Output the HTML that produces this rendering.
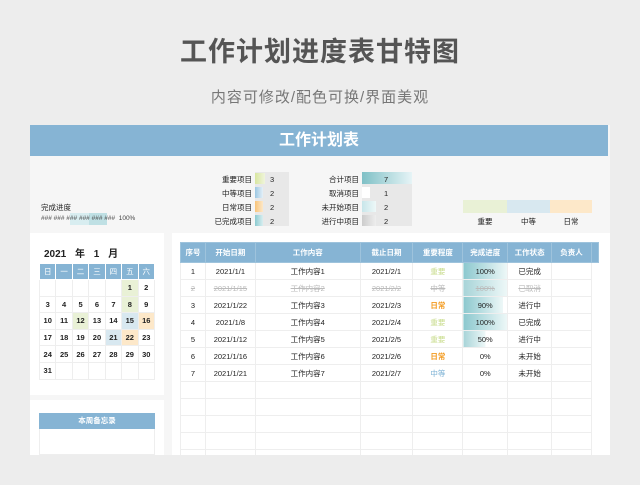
<!DOCTYPE html>
<html><head><meta charset="utf-8"><style>
*{margin:0;padding:0;box-sizing:border-box}
body{width:640px;height:485px;background:#ededed;position:relative;overflow:hidden;font-family:"Liberation Sans","Noto Sans CJK SC",sans-serif;color:#222}
.a{position:absolute}
.t{font-size:7.5px;white-space:nowrap}
.bar{height:12px}
table{border-collapse:collapse;position:absolute}
td{text-align:center;font-size:7.5px;border:1px solid #eee;padding:0}
</style></head><body>
<div class="a" style="left:0;top:30px;width:640px;text-align:center;font-size:27px;color:#555;font-weight:bold;letter-spacing:1px">工作计划进度表甘特图</div>
<div class="a" style="left:0;top:86px;width:640px;text-align:center;font-size:15px;color:#777;letter-spacing:1px">内容可修改/配色可换/界面美观</div>

<div class="a" style="left:30px;top:125px;width:580px;height:330px;background:#f6f6f6"></div>
<div class="a" style="left:30px;top:125px;width:578px;height:31px;background:#86b4d4;color:#fff;font-weight:bold;font-size:16px;text-align:center;line-height:31px">工作计划表</div>

<div class="a t" style="left:41px;top:202px">完成进度</div>
<div class="a" style="left:70px;top:213px;width:37px;height:12px;background:#d8edf0"></div>
<div class="a" style="left:89px;top:213px;width:18px;height:12px;background:#bfe0e4"></div>
<div class="a t" style="left:41px;top:215px;color:#444;font-size:6.5px">### ### ### ### ### ###&nbsp; 100%</div>

<!-- summary left -->
<div class="a t" style="left:200px;top:173px;width:52px;text-align:right;line-height:14px">重要项目<br>中等项目<br>日常项目<br>已完成项目</div>
<div class="a" style="left:255px;top:172px;width:34px;height:54px;background:linear-gradient(#e8e8e8,#e8e8e8)"></div>
<div class="a" style="left:255px;top:173px;width:10px;height:11px;background:linear-gradient(90deg,#d8e6a0,#f0f5dc)"></div>
<div class="a" style="left:255px;top:187px;width:8px;height:11px;background:linear-gradient(90deg,#9cc7e2,#e4f0f8)"></div>
<div class="a" style="left:255px;top:201px;width:8px;height:11px;background:linear-gradient(90deg,#f8c47a,#fde8c8)"></div>
<div class="a" style="left:255px;top:215px;width:8px;height:11px;background:linear-gradient(90deg,#8ccad0,#d8eef0)"></div>
<div class="a t" style="left:270px;top:173px;line-height:14px">3<br>2<br>2<br>2</div>

<div class="a t" style="left:310px;top:173px;width:49px;text-align:right;line-height:14px">合计项目<br>取消项目<br>未开始项目<br>进行中项目</div>
<div class="a" style="left:362px;top:172px;width:50px;height:54px;background:#e8e8e8"></div>
<div class="a" style="left:362px;top:172px;width:50px;height:12px;background:linear-gradient(90deg,#7fc0c6,#e6f4f6)"></div>
<div class="a" style="left:362px;top:187px;width:8px;height:11px;background:#fff"></div>
<div class="a" style="left:362px;top:201px;width:14px;height:11px;background:linear-gradient(90deg,#c8e6ea,#eef8f8)"></div>
<div class="a" style="left:362px;top:215px;width:14px;height:11px;background:linear-gradient(90deg,#ccc,#eee)"></div>
<div class="a t" style="left:384px;top:173px;line-height:14px">7<br>1<br>2<br>2</div>

<div class="a" style="left:463px;top:200px;width:44px;height:13px;background:#e9f1d6"></div>
<div class="a" style="left:507px;top:200px;width:43px;height:13px;background:#d8e8f0"></div>
<div class="a" style="left:550px;top:200px;width:42px;height:13px;background:#fde8c9"></div>
<div class="a t" style="left:463px;top:216px;width:44px;text-align:center">重要</div>
<div class="a t" style="left:507px;top:216px;width:43px;text-align:center">中等</div>
<div class="a t" style="left:550px;top:216px;width:42px;text-align:center">日常</div>

<!-- calendar panel -->
<div class="a" style="left:30px;top:233px;width:134px;height:162px;background:#fff"></div>
<div class="a" style="left:30px;top:400px;width:134px;height:55px;background:#fff"></div>
<div class="a" style="left:172px;top:233px;width:438px;height:222px;background:#fff"></div>
<div class="a" style="left:44px;top:245px;font-size:10px;font-weight:bold;word-spacing:6px">2021 年 1 月</div>
<table style="left:39px;top:263px;width:116px">
<tr style="background:#86b4d4;color:#fff;height:16px"><td style="border:1px solid #fff;color:#fff">日</td><td style="border:1px solid #fff;color:#fff">一</td><td style="border:1px solid #fff;color:#fff">二</td><td style="border:1px solid #fff;color:#fff">三</td><td style="border:1px solid #fff;color:#fff">四</td><td style="border:1px solid #fff;color:#fff">五</td><td style="border:1px solid #fff;color:#fff">六</td></tr>
<tr style="height:16.6px;font-weight:bold"><td></td><td></td><td></td><td></td><td></td><td style="background:#e9f1d6"><b>1</b></td><td><b>2</b></td></tr>
<tr style="height:16.6px"><td><b>3</b></td><td><b>4</b></td><td><b>5</b></td><td><b>6</b></td><td><b>7</b></td><td style="background:#e9f1d6"><b>8</b></td><td><b>9</b></td></tr>
<tr style="height:16.6px"><td><b>10</b></td><td><b>11</b></td><td style="background:#e9f1d6"><b>12</b></td><td><b>13</b></td><td><b>14</b></td><td style="background:#d8e8f0"><b>15</b></td><td style="background:#fde8c9"><b>16</b></td></tr>
<tr style="height:16.6px"><td><b>17</b></td><td><b>18</b></td><td><b>19</b></td><td><b>20</b></td><td style="background:#d8e8f0"><b>21</b></td><td style="background:#fde8c9"><b>22</b></td><td><b>23</b></td></tr>
<tr style="height:16.6px"><td><b>24</b></td><td><b>25</b></td><td><b>26</b></td><td><b>27</b></td><td><b>28</b></td><td><b>29</b></td><td><b>30</b></td></tr>
<tr style="height:16.6px"><td><b>31</b></td><td></td><td></td><td></td><td></td><td></td><td></td></tr>
</table>
<div class="a" style="left:39px;top:413px;width:116px;height:16px;background:#86b4d4;color:#fff;font-size:7.5px;font-weight:bold;text-align:center;line-height:16px">本周备忘录</div>
<div class="a" style="left:39px;top:429px;width:116px;height:26px;border:1px solid #eee;border-top:0"></div>

<!-- main table -->
<table style="left:180px;top:242px;width:419px">
<colgroup><col style="width:25px"><col style="width:50px"><col style="width:105px"><col style="width:53px"><col style="width:50px"><col style="width:45px"><col style="width:44px"><col style="width:40px"><col style="width:7px"></colgroup>
<tr style="height:20px;background:#86b4d4;color:#fff;font-weight:bold"><td style="border:1px solid #9ec3dc">序号</td><td style="border:1px solid #9ec3dc">开始日期</td><td style="border:1px solid #9ec3dc">工作内容</td><td style="border:1px solid #9ec3dc">截止日期</td><td style="border:1px solid #9ec3dc">重要程度</td><td style="border:1px solid #9ec3dc">完成进度</td><td style="border:1px solid #9ec3dc">工作状态</td><td style="border:1px solid #9ec3dc">负责人</td><td style="border:1px solid #9ec3dc"></td></tr>
<tr style="height:17px"><td>1</td><td>2021/1/1</td><td>工作内容1</td><td>2021/2/1</td><td style="color:#c8dc8c">重要</td><td style="background:linear-gradient(90deg,#8cc8ce,#eef8f8)">100%</td><td>已完成</td><td></td><td style="border:0"></td></tr>
<tr style="height:17px;color:#bbb;text-decoration:line-through"><td>2</td><td>2021/1/15</td><td>工作内容2</td><td>2021/2/2</td><td style="text-decoration:none">中等</td><td style="background:linear-gradient(90deg,#a8d4d8,#eef8f8)">100%</td><td>已取消</td><td></td><td style="border:0"></td></tr>
<tr style="height:17px"><td>3</td><td>2021/1/22</td><td>工作内容3</td><td>2021/2/3</td><td style="color:#f39a1e;font-weight:bold">日常</td><td style="background:linear-gradient(90deg,#8cc8ce,#eef8f8 90%,#fff 90%)">90%</td><td>进行中</td><td></td><td style="border:0"></td></tr>
<tr style="height:17px"><td>4</td><td>2021/1/8</td><td>工作内容4</td><td>2021/2/4</td><td style="color:#c8dc8c">重要</td><td style="background:linear-gradient(90deg,#8cc8ce,#eef8f8)">100%</td><td>已完成</td><td></td><td style="border:0"></td></tr>
<tr style="height:17px"><td>5</td><td>2021/1/12</td><td>工作内容5</td><td>2021/2/5</td><td style="color:#c8dc8c">重要</td><td style="background:linear-gradient(90deg,#a8d4d8,#eef8f8 50%,#fff 50%)">50%</td><td>进行中</td><td></td><td style="border:0"></td></tr>
<tr style="height:17px"><td>6</td><td>2021/1/16</td><td>工作内容6</td><td>2021/2/6</td><td style="color:#f39a1e;font-weight:bold">日常</td><td>0%</td><td>未开始</td><td></td><td style="border:0"></td></tr>
<tr style="height:17px"><td>7</td><td>2021/1/21</td><td>工作内容7</td><td>2021/2/7</td><td style="color:#7ab0d4">中等</td><td>0%</td><td>未开始</td><td></td><td style="border:0"></td></tr>
<tr style="height:17px"><td></td><td></td><td></td><td></td><td></td><td></td><td></td><td></td><td style="border:0"></td></tr>
<tr style="height:17px"><td></td><td></td><td></td><td></td><td></td><td></td><td></td><td></td><td style="border:0"></td></tr>
<tr style="height:17px"><td></td><td></td><td></td><td></td><td></td><td></td><td></td><td></td><td style="border:0"></td></tr>
<tr style="height:17px"><td></td><td></td><td></td><td></td><td></td><td></td><td></td><td></td><td style="border:0"></td></tr>
<tr style="height:17px"><td></td><td></td><td></td><td></td><td></td><td></td><td></td><td></td><td style="border:0"></td></tr>
</table>
<div class="a" style="left:0;top:455px;width:640px;height:30px;background:#ededed"></div>
</body></html>
